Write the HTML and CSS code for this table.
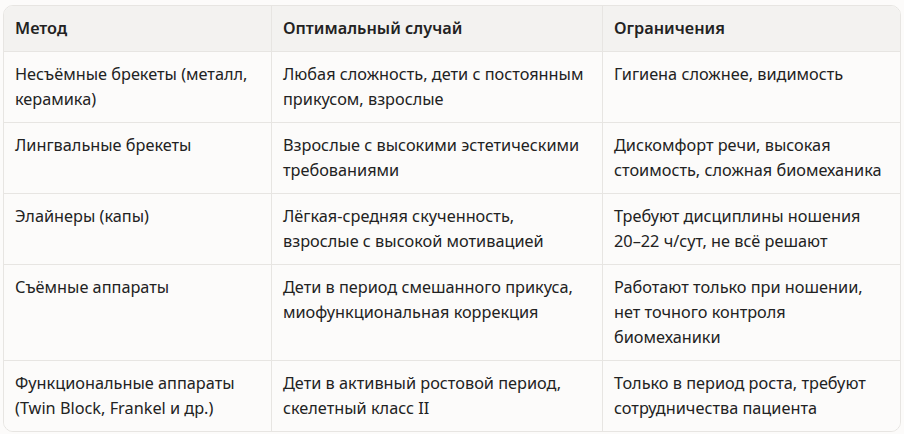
FILE: index.html
```html
<!DOCTYPE html>
<html lang="ru">
<head>
<meta charset="utf-8">
<link rel="stylesheet" href="styles.css">
</head>
<body>
<div class="wrap">
<table class="grid">
  <colgroup><col class="c1"><col class="c2"><col class="c3"></colgroup>
  <thead>
    <tr><th>Метод</th><th>Оптимальный случай</th><th>Ограничения</th></tr>
  </thead>
  <tbody>
    <tr><td>Несъёмные брекеты (металл, керамика)</td><td>Любая сложность, дети с постоянным прикусом, взрослые</td><td>Гигиена сложнее, видимость</td></tr>
    <tr><td>Лингвальные брекеты</td><td>Взрослые с высокими эстетическими требованиями</td><td>Дискомфорт речи, высокая стоимость, сложная биомеханика</td></tr>
    <tr><td>Элайнеры (капы)</td><td>Лёгкая-средняя скученность, взрослые с высокой мотивацией</td><td>Требуют дисциплины ношения 20–22 ч/сут, не всё решают</td></tr>
    <tr><td>Съёмные аппараты</td><td>Дети в период смешанного прикуса, миофункциональная коррекция</td><td>Работают только при ношении, нет точного контроля биомеханики</td></tr>
    <tr><td>Функциональные аппараты (Twin Block, Frankel и др.)</td><td>Дети в активный ростовой период, скелетный класс II</td><td>Только в период роста, требуют сотрудничества пациента</td></tr>
  </tbody>
</table>
</div>
</body>
</html>
```
FILE: styles.css
```css
html, body {
  margin: 0;
  background: #fcfbfa;
}
.wrap {
  padding: 5px 3px;
}
.grid {
  width: 898px;
  border-collapse: separate;
  border-spacing: 0;
  border: 1px solid #e7e5e2;
  border-radius: 10px;
  overflow: hidden;
  table-layout: fixed;
  font-family: "Noto Sans", sans-serif;
  font-size: 16.3px;
  line-height: 25px;
  color: #222;
}
.c1 { width: 267px; }
.c2 { width: 331px; }
.c3 { width: auto; }
.grid th, .grid td {
  text-align: left;
  vertical-align: top;
  padding: 10px 11px;
  border-bottom: 1px solid #e7e5e2;
  border-left: 1px solid #e7e5e2;
}
.grid th:first-child, .grid td:first-child { border-left: none; }
.grid tbody tr:last-child td { border-bottom: none; }
.grid th {
  background: #f3f2f0;
  font-weight: 600;
}
.grid td {
  background: #fcfbfa;
}
```
